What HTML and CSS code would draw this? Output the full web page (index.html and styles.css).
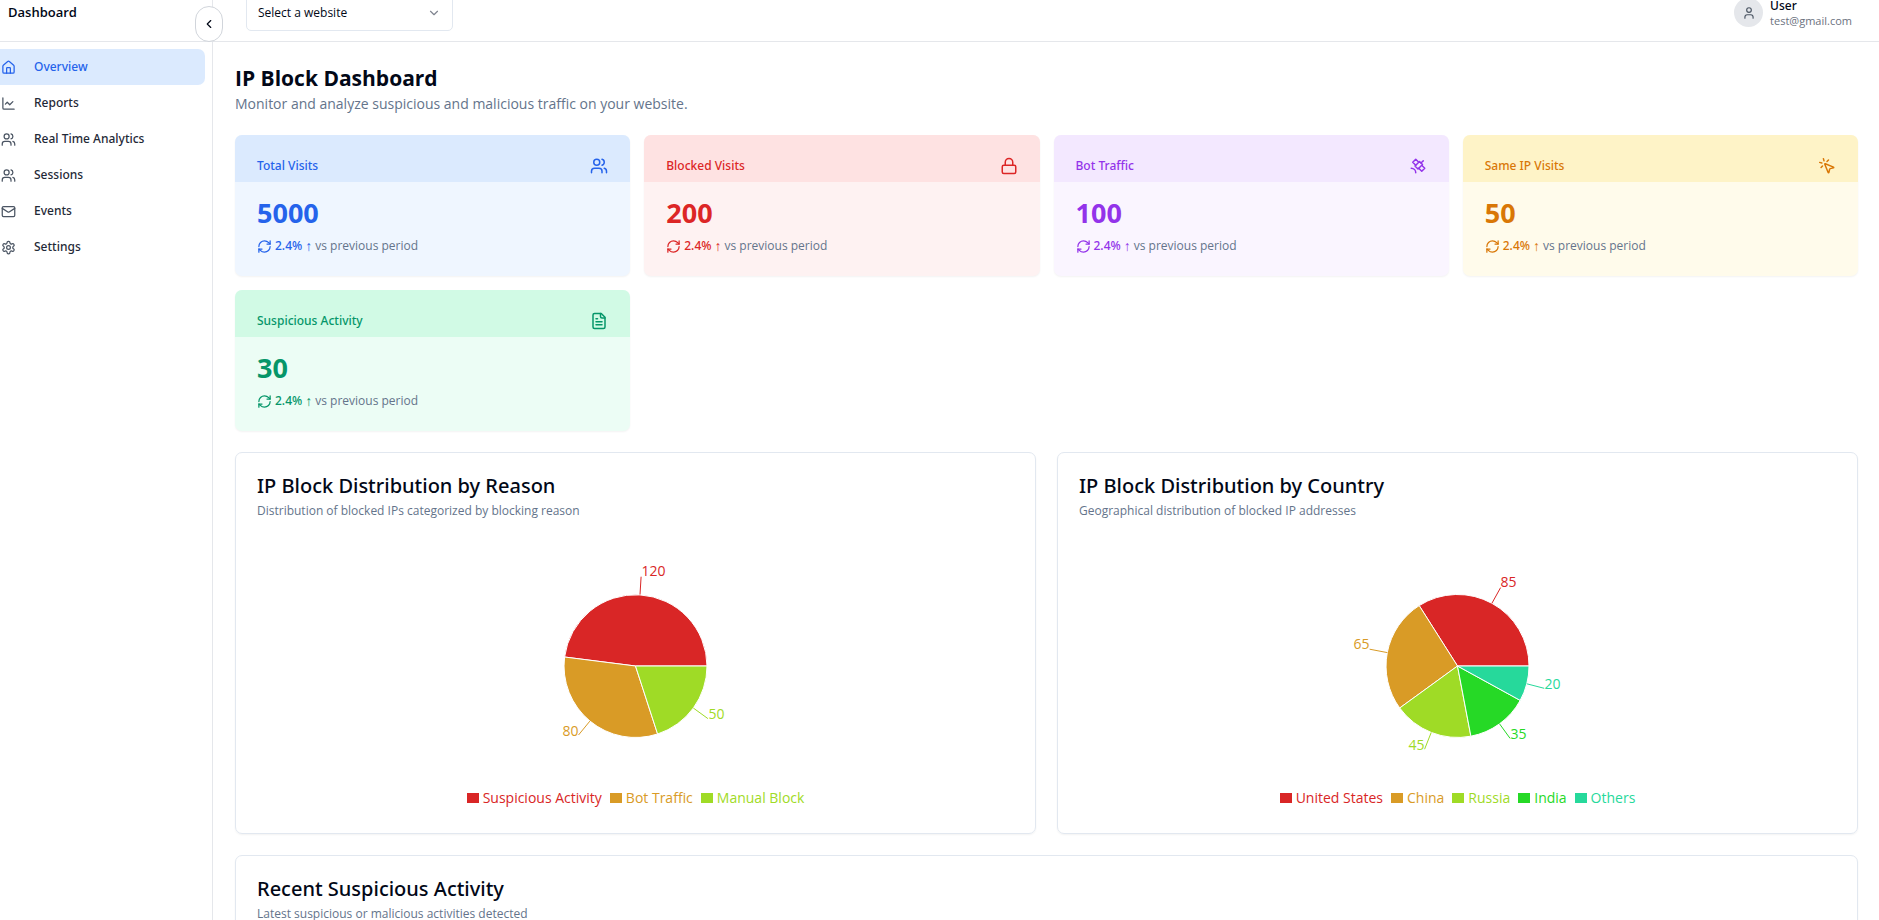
FILE: index.html
```html
<!DOCTYPE html>
<html lang="en">
<head>
<meta charset="utf-8">
<meta name="viewport" content="width=device-width, initial-scale=1">
<title>IP Block Dashboard</title>
<link rel="stylesheet" href="styles.css">
</head>
<body>
<svg class="sprite" aria-hidden="true">
  <symbol id="home" viewBox="0 0 24 24"><path d="M15 21v-8a1 1 0 0 0-1-1h-4a1 1 0 0 0-1 1v8"/><path d="M3 10a2 2 0 0 1 .709-1.528l7-5.999a2 2 0 0 1 2.582 0l7 5.999A2 2 0 0 1 21 10v9a2 2 0 0 1-2 2H5a2 2 0 0 1-2-2z"/></symbol>
  <symbol id="chart" viewBox="0 0 24 24"><path d="M3 3v16a2 2 0 0 0 2 2h16"/><path d="m19 9-5 5-4-4-3 3"/></symbol>
  <symbol id="users" viewBox="0 0 24 24"><path d="M16 21v-2a4 4 0 0 0-4-4H6a4 4 0 0 0-4 4v2"/><circle cx="9" cy="7" r="4"/><path d="M22 21v-2a4 4 0 0 0-3-3.87"/><path d="M16 3.13a4 4 0 0 1 0 7.75"/></symbol>
  <symbol id="mail" viewBox="0 0 24 24"><rect width="20" height="16" x="2" y="4" rx="2"/><path d="m22 7-8.97 5.7a1.94 1.94 0 0 1-2.06 0L2 7"/></symbol>
  <symbol id="gear" viewBox="0 0 24 24"><path d="M12.22 2h-.44a2 2 0 0 0-2 2v.18a2 2 0 0 1-1 1.73l-.43.25a2 2 0 0 1-2 0l-.15-.08a2 2 0 0 0-2.73.73l-.22.38a2 2 0 0 0 .73 2.73l.15.1a2 2 0 0 1 1 1.72v.51a2 2 0 0 1-1 1.74l-.15.09a2 2 0 0 0-.73 2.73l.22.38a2 2 0 0 0 2.73.73l.15-.08a2 2 0 0 1 2 0l.43.25a2 2 0 0 1 1 1.73V20a2 2 0 0 0 2 2h.44a2 2 0 0 0 2-2v-.18a2 2 0 0 1 1-1.73l.43-.25a2 2 0 0 1 2 0l.15.08a2 2 0 0 0 2.73-.73l.22-.39a2 2 0 0 0-.73-2.73l-.15-.08a2 2 0 0 1-1-1.74v-.5a2 2 0 0 1 1-1.74l.15-.09a2 2 0 0 0 .73-2.73l-.22-.38a2 2 0 0 0-2.73-.73l-.15.08a2 2 0 0 1-2 0l-.43-.25a2 2 0 0 1-1-1.73V4a2 2 0 0 0-2-2z"/><circle cx="12" cy="12" r="3"/></symbol>
  <symbol id="lock" viewBox="0 0 24 24"><rect width="18" height="11" x="3" y="11" rx="2"/><path d="M7 11V7a5 5 0 0 1 10 0v4"/></symbol>
  <symbol id="satellite" viewBox="0 0 24 24"><path d="M13 7 9 3 5 7l4 4"/><path d="m17 11 4 4-4 4-4-4"/><path d="m8 12 4 4 6-6-4-4Z"/><path d="m16 8 3-3"/><path d="M9 21a6 6 0 0 0-6-6"/></symbol>
  <symbol id="click" viewBox="0 0 24 24"><path d="M14 4.1 12 6"/><path d="m5.1 8-2.9-.8"/><path d="m6 12-1.9 2"/><path d="M7.2 2.2 8 5.1"/><path d="M9.037 9.69a.498.498 0 0 1 .653-.653l11 4.5a.5.5 0 0 1-.074.949l-4.349 1.041a1 1 0 0 0-.74.739l-1.04 4.35a.5.5 0 0 1-.95.074z"/></symbol>
  <symbol id="file" viewBox="0 0 24 24"><path d="M15 2H6a2 2 0 0 0-2 2v16a2 2 0 0 0 2 2h12a2 2 0 0 0 2-2V7Z"/><path d="M14 2v4a2 2 0 0 0 2 2h4"/><path d="M10 9H8"/><path d="M16 13H8"/><path d="M16 17H8"/></symbol>
  <symbol id="refresh" viewBox="0 0 24 24"><path d="M3 12a9 9 0 0 1 9-9 9.75 9.75 0 0 1 6.74 2.74L21 8"/><path d="M21 3v5h-5"/><path d="M21 12a9 9 0 0 1-9 9 9.75 9.75 0 0 1-6.74-2.74L3 16"/><path d="M8 16H3v5"/></symbol>
  <symbol id="user" viewBox="0 0 24 24"><path d="M19 21v-2a4 4 0 0 0-4-4H9a4 4 0 0 0-4 4v2"/><circle cx="12" cy="7" r="4"/></symbol>
  <symbol id="left" viewBox="0 0 24 24"><path d="m15 18-6-6 6-6"/></symbol>
  <symbol id="down" viewBox="0 0 24 24"><path d="m6 9 6 6 6-6"/></symbol>
</svg>

<div class="app">
  <aside class="sidebar">
    <div class="brand">Dashboard</div>
    <button class="toggle" type="button" aria-label="Collapse sidebar"><svg class="icon icon-sm"><use href="#left"/></svg></button>
    <nav class="nav">
      <a class="nav-link active" href="#"><svg class="icon"><use href="#home"/></svg>Overview</a>
      <a class="nav-link" href="#"><svg class="icon"><use href="#chart"/></svg>Reports</a>
      <a class="nav-link" href="#"><svg class="icon"><use href="#users"/></svg>Real Time Analytics</a>
      <a class="nav-link" href="#"><svg class="icon"><use href="#users"/></svg>Sessions</a>
      <a class="nav-link" href="#"><svg class="icon"><use href="#mail"/></svg>Events</a>
      <a class="nav-link" href="#"><svg class="icon"><use href="#gear"/></svg>Settings</a>
    </nav>
  </aside>

  <div class="page">
    <header class="topbar">
      <div class="picker">
        <select class="picker-select" aria-label="Website"><option>Select a website</option></select>
        <svg class="icon icon-sm picker-arrow"><use href="#down"/></svg>
      </div>
      <div class="account">
        <span class="avatar"><svg class="icon icon-sm"><use href="#user"/></svg></span>
        <div>
          <div class="account-name">User</div>
          <div class="account-mail">test@gmail.com</div>
        </div>
      </div>
    </header>

    <main class="content">
      <div>
        <h1 class="title">IP Block Dashboard</h1>
        <p class="subtitle">Monitor and analyze suspicious and malicious traffic on your website.</p>
      </div>

      <section class="stats">
        <article class="stat blue">
          <div class="stat-head"><h3 class="stat-title">Total Visits</h3><svg class="icon icon-lg"><use href="#users"/></svg></div>
          <div class="stat-body"><div class="stat-value">5000</div>
          <p class="trend"><svg class="icon"><use href="#refresh"/></svg><strong class="trend-value">2.4%</strong><span class="trend-arrow">↑</span><span class="trend-note">vs previous period</span></p></div>
        </article>
        <article class="stat red">
          <div class="stat-head"><h3 class="stat-title">Blocked Visits</h3><svg class="icon icon-lg"><use href="#lock"/></svg></div>
          <div class="stat-body"><div class="stat-value">200</div>
          <p class="trend"><svg class="icon"><use href="#refresh"/></svg><strong class="trend-value">2.4%</strong><span class="trend-arrow">↑</span><span class="trend-note">vs previous period</span></p></div>
        </article>
        <article class="stat purple">
          <div class="stat-head"><h3 class="stat-title">Bot Traffic</h3><svg class="icon icon-lg"><use href="#satellite"/></svg></div>
          <div class="stat-body"><div class="stat-value">100</div>
          <p class="trend"><svg class="icon"><use href="#refresh"/></svg><strong class="trend-value">2.4%</strong><span class="trend-arrow">↑</span><span class="trend-note">vs previous period</span></p></div>
        </article>
        <article class="stat amber">
          <div class="stat-head"><h3 class="stat-title">Same IP Visits</h3><svg class="icon icon-lg"><use href="#click"/></svg></div>
          <div class="stat-body"><div class="stat-value">50</div>
          <p class="trend"><svg class="icon"><use href="#refresh"/></svg><strong class="trend-value">2.4%</strong><span class="trend-arrow">↑</span><span class="trend-note">vs previous period</span></p></div>
        </article>
        <article class="stat green">
          <div class="stat-head"><h3 class="stat-title">Suspicious Activity</h3><svg class="icon icon-lg"><use href="#file"/></svg></div>
          <div class="stat-body"><div class="stat-value">30</div>
          <p class="trend"><svg class="icon"><use href="#refresh"/></svg><strong class="trend-value">2.4%</strong><span class="trend-arrow">↑</span><span class="trend-note">vs previous period</span></p></div>
        </article>
      </section>

      <section class="charts">
        <article class="panel">
          <h2 class="panel-title">IP Block Distribution by Reason</h2>
          <p class="panel-text">Distribution of blocked IPs categorized by blocking reason</p>
          <svg class="pie" viewBox="-180 -124 360 248" role="img" aria-label="Blocked IPs by reason">
            <g class="slices">
              <path class="c1" d="M0 0L71.5 0A71.5 71.5 0 0 0 -70.9 -9Z"/>
              <path class="c2" d="M0 0L-70.9 -9A71.5 71.5 0 0 0 22.1 68Z"/>
              <path class="c3" d="M0 0L22.1 68A71.5 71.5 0 0 0 71.5 0Z"/>
            </g>
            <g class="c1"><path class="lead" d="M4.5 -71.4L5.6 -89.3"/><text x="6" y="-90">120</text></g>
            <g class="c2"><path class="lead" d="M-45.6 55.1L-57 69"/><text class="end" x="-57" y="70">80</text></g>
            <g class="c3"><path class="lead" d="M57.8 42L72.4 52.6"/><text x="73" y="53">50</text></g>
          </svg>
          <ul class="legend">
            <li class="legend-item c1">Suspicious Activity</li>
            <li class="legend-item c2">Bot Traffic</li>
            <li class="legend-item c3">Manual Block</li>
          </ul>
        </article>
        <article class="panel">
          <h2 class="panel-title">IP Block Distribution by Country</h2>
          <p class="panel-text">Geographical distribution of blocked IP addresses</p>
          <svg class="pie" viewBox="-180 -124 360 248" role="img" aria-label="Blocked IPs by country">
            <g class="slices">
              <path class="c1" d="M0 0L71.5 0A71.5 71.5 0 0 0 -38.3 -60.4Z"/>
              <path class="c2" d="M0 0L-38.3 -60.4A71.5 71.5 0 0 0 -57.8 42Z"/>
              <path class="c3" d="M0 0L-57.8 42A71.5 71.5 0 0 0 13.4 70.2Z"/>
              <path class="c4" d="M0 0L13.4 70.2A71.5 71.5 0 0 0 62.7 34.4Z"/>
              <path class="c5" d="M0 0L62.7 34.4A71.5 71.5 0 0 0 71.5 0Z"/>
            </g>
            <g class="c1"><path class="lead" d="M34.4 -62.7L43.1 -78.4"/><text x="43" y="-79">85</text></g>
            <g class="c2"><path class="lead" d="M-70.2 -13.4L-87.9 -16.8"/><text class="end" x="-88" y="-17">65</text></g>
            <g class="c3"><path class="lead" d="M-26.3 66.5L-32.9 83.2"/><text class="end" x="-33" y="84">45</text></g>
            <g class="c4"><path class="lead" d="M42 57.8L52.6 72.4"/><text x="53" y="73">35</text></g>
            <g class="c5"><path class="lead" d="M69.3 17.8L86.7 22.3"/><text x="87" y="23">20</text></g>
          </svg>
          <ul class="legend">
            <li class="legend-item c1">United States</li>
            <li class="legend-item c2">China</li>
            <li class="legend-item c3">Russia</li>
            <li class="legend-item c4">India</li>
            <li class="legend-item c5">Others</li>
          </ul>
        </article>
      </section>

      <section class="panel">
        <h2 class="panel-title">Recent Suspicious Activity</h2>
        <p class="panel-text">Latest suspicious or malicious activities detected</p>
      </section>
    </main>
  </div>
</div>
</body>
</html>
```

FILE: styles.css
```css
* { box-sizing: border-box; margin: 0; padding: 0; }

body {
  height: 100vh;
  overflow: hidden;
  background: #fff;
  color: #020817;
  font-family: "Open Sans", "Noto Sans", sans-serif;
  font-size: 12px;
  line-height: 18px;
}

.sprite { position: absolute; width: 0; height: 0; }

.icon {
  flex: none;
  width: 15px;
  height: 15px;
  fill: none;
  stroke: currentColor;
  stroke-width: 2;
  stroke-linecap: round;
  stroke-linejoin: round;
}
.icon-sm { width: 14px; height: 14px; }
.icon-lg { width: 18px; height: 18px; }

/* Medium weight comes from Noto Sans. */
.nav-link,
.account-name,
.stat-title,
.trend-value,
.panel-title {
  font-family: "Noto Sans", "Open Sans", sans-serif;
  font-weight: 500;
}

/* The shell is scrolled up under the top edge of the window. */
.app {
  display: flex;
  min-height: 100vh;
  margin-top: -16px;
}

.sidebar {
  position: relative;
  flex: none;
  width: 213px;
  border-right: 1px solid #e5e7eb;
}
.brand {
  height: 58px;
  padding: 19px 8px;
  border-bottom: 1px solid #e5e7eb;
  font-size: 13px;
  font-weight: 600;
}
.toggle {
  position: absolute;
  top: 22px;
  right: -11px;
  display: grid;
  place-items: center;
  width: 28px;
  height: 36px;
  border: 1px solid #d1d5db;
  border-radius: 14px;
  background: #fff;
  color: #020817;
}
.nav { padding: 7px 7px 0 0; }
.nav-link {
  display: flex;
  align-items: center;
  gap: 18px;
  height: 36px;
  padding-left: 1px;
  border-radius: 0 7px 7px 0;
  color: #1f2937;
  text-decoration: none;
}
.nav-link .icon { color: #4b5563; }
.nav-link.active { background: #dbeafe; color: #2563eb; }
.nav-link.active .icon { color: #2563eb; }

.page { flex: 1; min-width: 0; }
.topbar {
  display: flex;
  align-items: center;
  justify-content: space-between;
  height: 58px;
  padding: 0 27px 0 33px;
  border-bottom: 1px solid #e5e7eb;
}
.picker { position: relative; width: 207px; }
.picker-select {
  display: block;
  width: 100%;
  height: 36px;
  padding: 0 11px;
  border: 1px solid #e2e8f0;
  border-radius: 5px;
  background: #fff;
  color: #020817;
  font: inherit;
  appearance: none;
}
.picker-arrow {
  position: absolute;
  top: 11px;
  right: 12px;
  color: #808590;
  pointer-events: none;
}
.account { display: flex; align-items: center; gap: 7px; }
.avatar {
  display: grid;
  place-items: center;
  width: 29px;
  height: 29px;
  border-radius: 50%;
  background: #e5e7eb;
  color: #4b5563;
}
.account-name { line-height: 16px; }
.account-mail { color: #6b7280; font-size: 11px; line-height: 14px; }

.content {
  display: flex;
  flex-direction: column;
  gap: 21px;
  padding: 22px 21px 22px 22px;
}
.title { font-size: 21px; font-weight: 700; line-height: 29px; }
.subtitle { color: #64748b; font-size: 14px; line-height: 21px; }

.stats {
  display: grid;
  grid-template-columns: repeat(4, 1fr);
  gap: 14px;
}
.stat {
  overflow: hidden;
  border-radius: 7px;
  box-shadow: 0 1px 2px rgb(0 0 0 / 5%);
}
.stat-head {
  display: flex;
  align-items: center;
  justify-content: space-between;
  padding: 22px 22px 7px 22px;
}
.stat-title { font-size: 12px; }
.stat-body { padding: 14px 22px 21px; }
.stat-value { font-size: 27px; font-weight: 700; line-height: 34px; }
.trend { display: flex; align-items: center; gap: 3px; margin-top: 7px; }
.trend-arrow { font-family: "Liberation Sans", sans-serif; font-size: 14px; }
.trend-note { color: #64748b; }

.blue { background: #eff6ff; color: #2563eb; }
.blue .stat-head { background: #dbeafe; }
.red { background: #fef2f2; color: #dc2626; }
.red .stat-head { background: #fee2e2; }
.purple { background: #faf5ff; color: #9333ea; }
.purple .stat-head { background: #f3e8ff; }
.amber { background: #fffbeb; color: #d97706; }
.amber .stat-head { background: #fef3c7; }
.green { background: #ecfdf5; color: #059669; }
.green .stat-head { background: #d1fae5; }

.charts {
  display: grid;
  grid-template-columns: 1fr 1fr;
  gap: 21px;
}
.panel {
  padding: 21px;
  border: 1px solid #e2e8f0;
  border-radius: 7px;
  box-shadow: 0 1px 2px rgb(0 0 0 / 5%);
}
.panel-title { font-size: 20px; line-height: 24px; }
.panel-text { margin-top: 4px; color: #64748b; }

.pie { display: block; width: 100%; height: 248px; margin-top: 22px; }
.pie text { fill: currentColor; font-size: 14px; }
.pie .end { text-anchor: end; }
.slices { stroke: #fff; }
.slices path { fill: currentColor; }
.lead { fill: none; stroke: currentColor; }

.legend {
  display: flex;
  align-items: flex-start;
  justify-content: center;
  gap: 8px;
  height: 22px;
  font-size: 14px;
  line-height: 16px;
  list-style: none;
}
.legend-item { display: flex; align-items: center; gap: 4px; }
.legend-item::before {
  content: "";
  width: 12px;
  height: 10px;
  background: currentColor;
}

.c1 { color: #d92626; }
.c2 { color: #d99b26; }
.c3 { color: #9fdb26; }
.c4 { color: #26d926; }
.c5 { color: #26d99b; }
```
